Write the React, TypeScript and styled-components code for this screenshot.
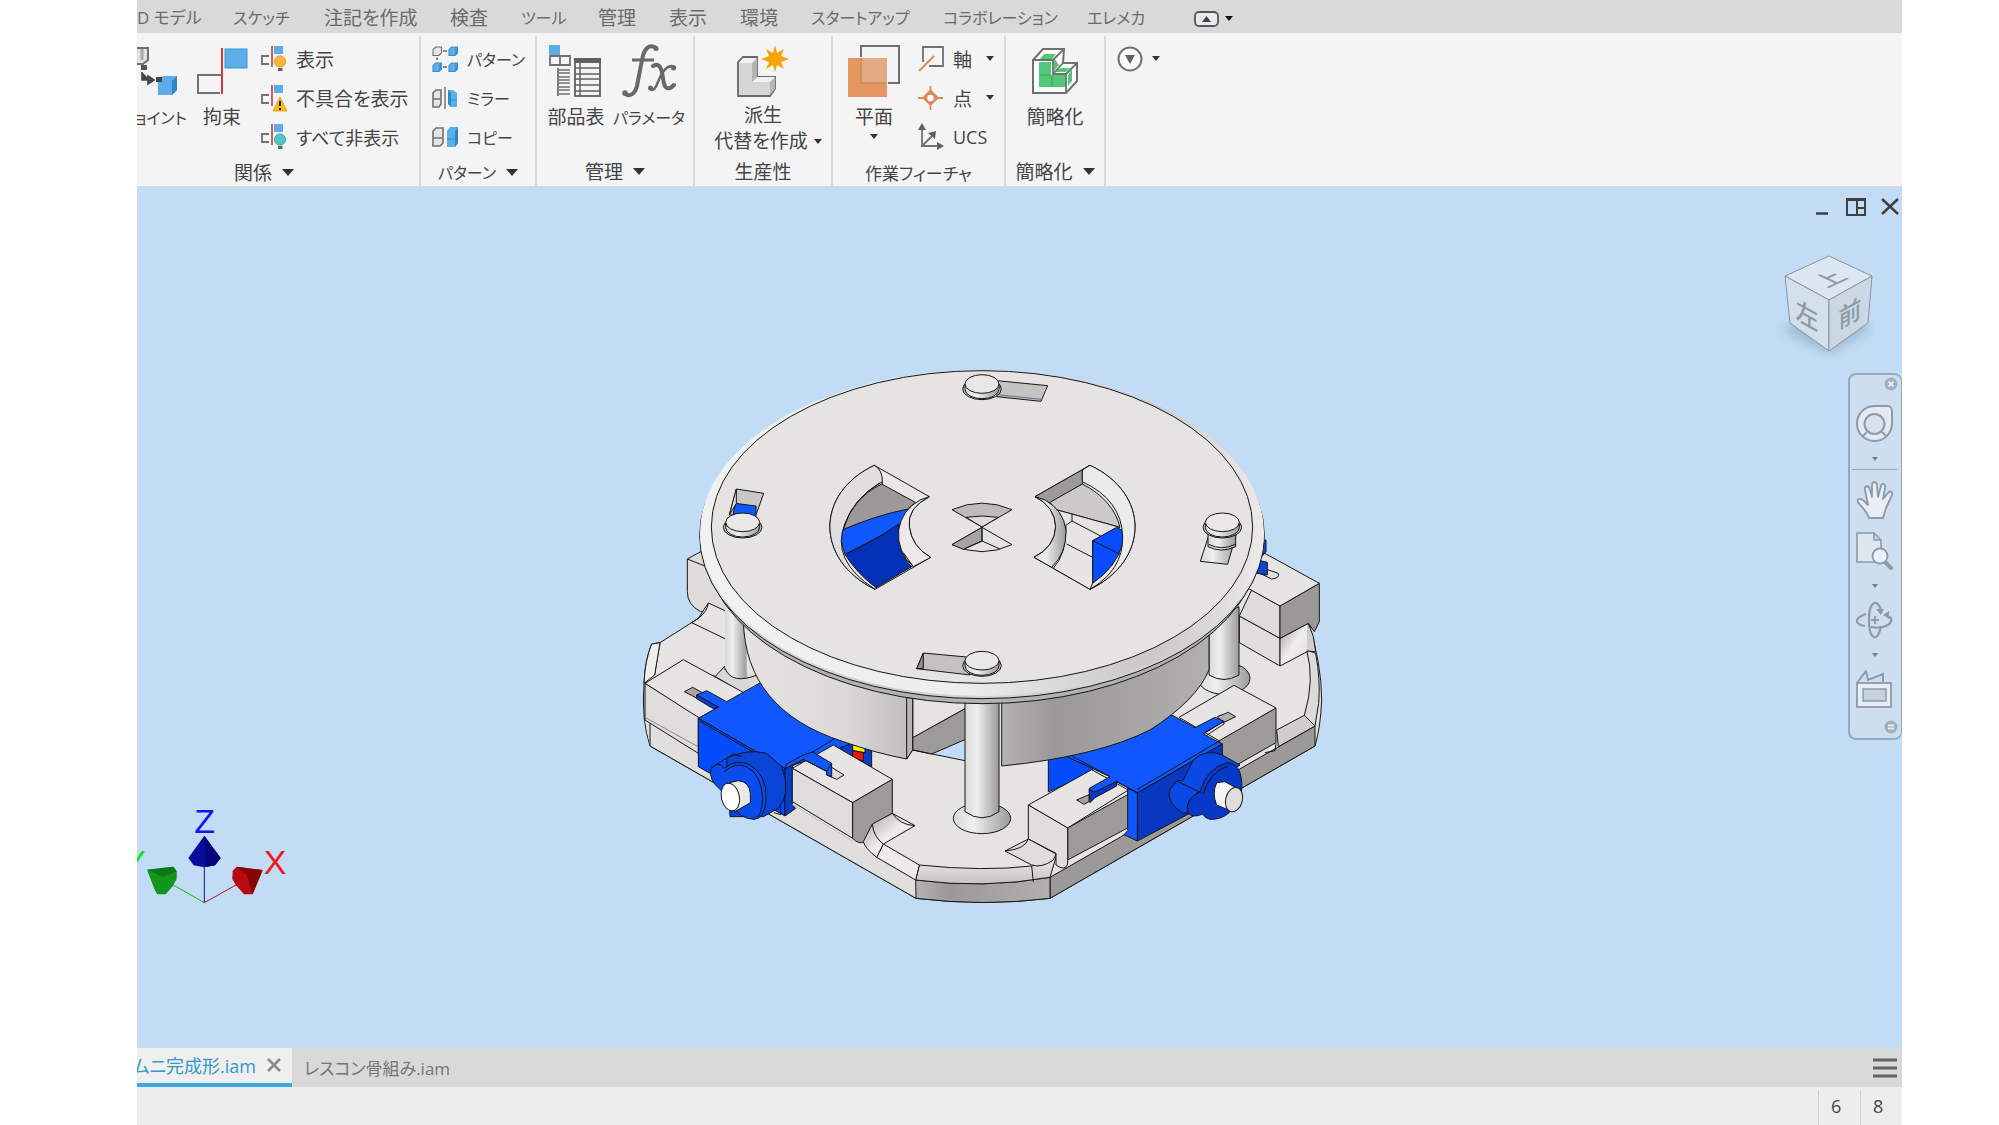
import React from 'react';
import styled, { createGlobalStyle, css } from 'styled-components';

const GlobalStyle = createGlobalStyle`
  * { box-sizing: border-box; }
  body {
    margin: 0;
    background: #fff;
    font-family: "Open Sans", "Noto Sans CJK JP", sans-serif;
    font-size: 18px;
    font-feature-settings: "palt";
    color: #444;
  }
  button {
    margin: 0;
    padding: 0;
    border: 0;
    background: none;
    font: inherit;
    font-feature-settings: inherit;
    color: inherit;
    white-space: nowrap;
    cursor: pointer;
  }
  svg { display: block; flex: none; }
`;

const labelSize = (text: string) => {
  const katakana = /[ァ-ヶ]/.test(text);
  const kanji = /[一-龠]/.test(text);
  if (katakana) return kanji || /[A-Z]/.test(text) ? 17 : 16;
  return kanji && !/[ぁ-ん]{2}/.test(text) ? 19 : 18;
};

const Text = styled.span<{ $size: number }>`
  font-size: ${(p) => p.$size}px;
`;

const Label = ({ children }: { children: string }) => <Text $size={labelSize(children)}>{children}</Text>;

const Page = styled.div`
  height: 100vh;
  padding: 0 97px 0 137px;
`;

const Window = styled.div`
  display: flex;
  flex-direction: column;
  height: 100%;
  overflow: hidden;
  background: #ededed;
`;

/* ---------- ribbon tabs ---------- */

const RibbonTabs = styled.nav`
  display: flex;
  align-items: center;
  flex: none;
  height: 33px;
  background: #d9d9d9;
  color: #6a6a6a;
`;

const RibbonTab = styled.button<{ $width: number }>`
  flex: 0 0 ${(p) => p.$width}px;
  line-height: 30px;
  padding-top: 2px;
  text-align: left;
`;

const TabsToggle = styled.button`
  display: flex;
  align-items: center;
  gap: 6px;
  margin-left: 16px;
  padding-top: 4px;
`;

/* ---------- ribbon ---------- */

const Ribbon = styled.div`
  display: flex;
  flex: none;
  height: 155px;
  padding-top: 3px;
  background: #f4f4f4;
  border-bottom: 2px solid #d3d9de;
`;

const PanelBox = styled.section<{ $width: number }>`
  display: flex;
  flex-direction: column;
  flex: 0 0 ${(p) => p.$width}px;
  border-right: 2px solid #d9d9d9;
`;

const PanelBody = styled.div<{ $pad?: number }>`
  display: flex;
  flex: 1;
  padding-left: ${(p) => p.$pad || 0}px;
`;

const PanelTitle = styled.button<{ $wide?: boolean }>`
  display: flex;
  justify-content: center;
  align-items: center;
  gap: 10px;
  height: 32px;
  padding-top: 2px;
  padding-right: ${(p) => (p.$wide ? 28 : 0)}px;
`;

const BigButton = styled.button<{ $width: number; $clip?: boolean }>`
  display: flex;
  flex-direction: column;
  align-items: center;
  flex: 0 0 ${(p) => p.$width}px;
  padding-top: 8px;
  line-height: 26px;
  ${(p) => p.$clip && css`align-items: flex-end; overflow: hidden;`}
`;

const BigLabel = styled.span<{ $tight?: boolean }>`
  margin-top: ${(p) => (p.$tight ? 4 : 6)}px;
`;

const LabelWithArrow = styled.span`
  display: flex;
  align-items: center;
  gap: 6px;
  padding-left: 10px;
`;

const ArrowBelow = styled.span`
  padding-top: 4px;
`;

const SmallColumn = styled.div<{ $left?: number }>`
  display: flex;
  flex-direction: column;
  padding-top: 3px;
  padding-left: ${(p) => p.$left || 0}px;
`;

const SmallButton = styled.button`
  display: flex;
  align-items: center;
  gap: 9px;
  height: 39px;
`;

const SmallLabel = styled.span<{ $width?: number }>`
  min-width: ${(p) => p.$width || 0}px;
  text-align: left;
`;

const RoundMenu = styled.button`
  display: flex;
  align-items: center;
  gap: 9px;
  height: 39px;
  margin: 3px 0 0 11px;
`;

const Caret = ({ size = 8, color = '#333' }: { size?: number; color?: string }) => (
  <svg width={size} height={size / 2 + 1} viewBox="0 0 12 7" preserveAspectRatio="none">
    <path d="M0 0H12L6 7Z" fill={color} />
  </svg>
);

/* ---------- ribbon icons ---------- */

const BLUE = '#5dade8';
const GREY = '#707070';

const Cube = ({ x, y, s, fill }: { x: number; y: number; s: number; fill: string }) => (
  <g transform={`translate(${x} ${y}) scale(${s})`}>
    <path d="M0 3L3 0H10V7L7 10H0Z" fill={fill} stroke={fill === BLUE ? '#3a8fd0' : GREY} strokeWidth="1.300" />
    {fill === BLUE && <path d="M7 3L10 0V7L7 10Z" fill="#3a8fd0" />}
  </g>
);

const JointIcon = () => (
  <svg width="50" height="54" viewBox="0 0 50 54">
    <g transform="translate(-9 0)">
      <path d="M0 4H20V15L15 20H0Z" fill="#e2e2e2" />
      <path d="M0 4H20V16L15 20H2" fill="none" stroke={GREY} strokeWidth="2" />
      <path d="M14 5V16" stroke="#aaa" strokeWidth="3" />
      <rect x="13" y="21" width="6" height="5" fill="#555" />
      <path d="M14 28V36H22M20 32L26 36L20 40Z" fill="#444" stroke="#444" strokeWidth="1.600" />
      <path d="M30 37L35 32H49V46L44 51H30Z" fill={BLUE} />
      <path d="M44 37L49 32V46L44 51Z" fill="#2f86c8" />
      <rect x="28" y="33" width="6" height="5" fill="#444" />
    </g>
  </svg>
);

const ConstrainIcon = () => (
  <svg width="52" height="54" viewBox="0 0 52 54">
    <rect x="29" y="5" width="22" height="19" fill={BLUE} stroke="#3f93d2" />
    <path d="M25 31H2V49H24" fill="none" stroke={GREY} strokeWidth="2" />
    <path d="M26 4V50" stroke="#d5353f" strokeWidth="2" />
  </svg>
);

const RelationIcon = ({ kind }: { kind: 'show' | 'warn' | 'hide' }) => (
  <svg width="26" height="28" viewBox="0 0 26 28">
    <rect x="13" y="1" width="9" height="8" fill={BLUE} />
    <path d="M8 11H1V19H8" fill="none" stroke={GREY} strokeWidth="1.800" />
    <path d="M11 1V22" stroke="#d5353f" strokeWidth="1.600" />
    {kind === 'warn' ? (
      <>
        <path d="M19 13L26 27H12Z" fill="#fbbf16" stroke="#d99a00" strokeWidth=".8" />
        <path d="M19 17V22M19 24V26" stroke="#222" strokeWidth="2" />
      </>
    ) : (
      <>
        <circle cx="19" cy="16.500" r="5.600" fill={kind === 'show' ? '#f7b63e' : '#56c5c8'} stroke={kind === 'show' ? '#e09a20' : '#35a6aa'} />
        <path d="M17 23H21.500V26H17Z" fill="#666" />
      </>
    )}
  </svg>
);

const PatternIcon = () => (
  <svg width="26" height="28" viewBox="0 0 26 28">
    <Cube x={1} y={2} s={0.85} fill="#e4e4e4" />
    <Cube x={17} y={2} s={0.85} fill={BLUE} />
    <Cube x={1} y={18} s={0.85} fill={BLUE} />
    <Cube x={17} y={18} s={0.85} fill={BLUE} />
    <path d="M11 6H15M11 22H15M5 12.500V15" stroke="#666" strokeWidth="1.500" />
  </svg>
);

const MirrorIcon = () => (
  <svg width="26" height="28" viewBox="0 0 26 28">
    <path d="M1 9L4 6H9V20L7 23H1ZM1 15H8" fill="#e4e4e4" stroke={GREY} strokeWidth="1.600" />
    <path d="M13 3V25" stroke="#777" strokeWidth="1.500" />
    <path d="M16 6H21L25 9V23H19L16 20Z" fill={BLUE} />
    <path d="M16 6L19 9V23L16 20Z" fill="#2f86c8" />
    <path d="M19 16H25" stroke="#3a8fd0" />
  </svg>
);

const CopyIcon = () => (
  <svg width="26" height="28" viewBox="0 0 26 28">
    <path d="M1 8L4 5H11V20L8 23H1ZM1 15H10" fill="#e4e4e4" stroke={GREY} strokeWidth="1.600" />
    <path d="M15 8L18 4H26V20L23 24H15Z" fill={BLUE} />
    <path d="M23 8L26 4V20L23 24Z" fill="#2f86c8" />
    <path d="M15 16H23" stroke="#3a8fd0" />
  </svg>
);

const BomIcon = () => (
  <svg width="54" height="54" viewBox="0 0 54 54">
    <rect x="0" y="1" width="11" height="11" fill={BLUE} />
    <path d="M1 12V21H11V12H21V21H11M11 12H1" fill="none" stroke={GREY} strokeWidth="1.800" />
    <path d="M9 24V52" stroke={GREY} strokeWidth="1.800" />
    <path d="M10 26H21M10 29H21M10 33H21M10 36H21M10 39H21M10 43H21M10 46H21M10 50H21" stroke={GREY} strokeWidth="1.500" />
    <rect x="25" y="14" width="27" height="5" fill="#606060" />
    <rect x="26" y="15" width="25" height="37" fill="none" stroke="#606060" strokeWidth="1.800" />
    <path d="M31 19V52M26 24H51M26 30H51M26 35H51M26 41H51M26 47H51" stroke="#606060" strokeWidth="1.500" fill="none" />
  </svg>
);

const FxIcon = () => (
  <svg width="54" height="54" viewBox="0 0 54 54">
    <g fill="none" stroke="#686868" strokeLinecap="round">
      <path d="M34 4C27 -1 22 5 20 16L15 42C13 50 8 53 3 50" strokeWidth="4" />
      <path d="M10 16H32" strokeWidth="3" strokeLinecap="butt" />
      <path d="M31 22C38 18 40 26 41 34C42 45 46 47 52 41" strokeWidth="4" />
      <path d="M53 23C45 19 39 30 36 38C33 46 30 47 28 45" strokeWidth="2.500" />
    </g>
    <circle cx="34" cy="4.500" r="2.500" fill="#686868" />
    <circle cx="3" cy="49" r="2.800" fill="#686868" />
    <circle cx="51.500" cy="24" r="2.500" fill="#686868" />
    <circle cx="28.500" cy="44" r="2.500" fill="#686868" />
  </svg>
);

const DeriveIcon = () => (
  <svg width="52" height="54" viewBox="0 0 52 54">
    <path d="M1 52V18L6 13H20V33H38V45L33 52Z" fill="#d6d6d6" stroke="#686868" strokeWidth="1.800" />
    <path d="M6 14H20L15 19H2ZM20 33H38L33 38H15Z" fill="#f1f1f1" />
    <path d="M15 19L20 14V33L15 38ZM33 38L38 33V45L33 51Z" fill="#b5b5b5" />
    <path d="M38 1L40 9L47 5L44 12L52 15L44 18L47 25L40 21L38 28L36 21L29 25L32 18L24 15L32 12L29 5L36 9Z" fill="#f5a20b" />
  </svg>
);

const PlaneIcon = () => (
  <svg width="54" height="54" viewBox="0 0 54 54">
    <path d="M14 13V2H52V39H41" fill="none" stroke={GREY} strokeWidth="2" />
    <rect x="1" y="14" width="39" height="39" fill="#e6975f" />
    <rect x="14" y="14" width="26" height="25" fill="#e2aa82" />
    <path d="M14 14V39H40" fill="none" stroke="#c98c5d" strokeWidth="1.500" />
  </svg>
);

const AxisIcon = () => (
  <svg width="26" height="28" viewBox="0 0 26 28">
    <path d="M5 17V2H25V21H11" fill="none" stroke={GREY} strokeWidth="1.800" />
    <path d="M1 26L16 11" stroke="#e28c56" strokeWidth="2.200" />
  </svg>
);

const PointIcon = () => (
  <svg width="26" height="28" viewBox="0 0 26 28">
    <path d="M0 14H25M12.500 2V26" stroke="#dc8a5a" strokeWidth="1.800" />
    <path d="M12.500 5L21 14L12.500 22L4 14Z" fill="#dc8a5a" />
    <circle cx="12.500" cy="14" r="3.200" fill="#fff" />
  </svg>
);

const UcsIcon = () => (
  <svg width="26" height="28" viewBox="0 0 26 28">
    <path d="M4 5V23H22M5 22L15 12" fill="none" stroke={GREY} strokeWidth="1.800" />
    <path d="M4 0L8 7H0ZM26 23L19 27V19ZM18 8L17 16L10 10Z" fill="#606060" />
  </svg>
);

const SimplifyIcon = () => (
  <svg width="48" height="54" viewBox="0 0 48 54">
    <path d="M2 16L12 5H33L32 19H46V37L35 49H2Z" fill="#fff" stroke={GREY} strokeWidth="2" />
    <path d="M8 18H20V31H34V43H8Z" fill="#50c878" />
    <path d="M13 10H25L21 15H9ZM26 25L31 24H39L35 28H24ZM23 14V27L28 21ZM37 31L41 25V37L37 42Z" fill="#50c878" />
    <path d="M2 16H22V30H35V49M22 16L33 5M22 30L32 19M35 30L46 19" fill="none" stroke={GREY} strokeWidth="1.800" />
    <path d="M8 31H20M21 31V43" fill="none" stroke="#3aa860" strokeWidth="1.200" />
  </svg>
);

/* ---------- viewport ---------- */

const Viewport = styled.main`
  position: relative;
  flex: 1;
  min-height: 0;
  overflow: hidden;
  background: #c2dcf5;
`;

const Model = styled.svg`
  width: 100%;
  height: 100%;
`;

const Triad = styled.svg`
  position: absolute;
  left: 0;
  bottom: 138px;
`;

const WindowControls = styled.div`
  position: absolute;
  top: 7px;
  right: 0;
  display: flex;
  gap: 10px;
`;

const WindowButton = styled.button`
  display: grid;
  place-items: center;
  width: 24px;
  height: 24px;
`;

const ViewCubeButton = styled.button`
  position: absolute;
  top: 60px;
  right: 28px;
`;

const NavBar = styled.aside`
  position: absolute;
  top: 185px;
  right: 0;
  display: flex;
  flex-direction: column;
  align-items: center;
  width: 54px;
  height: 367px;
  padding-right: 2px;
  border: 2px solid #93aac0;
  border-right-width: 1px;
  border-radius: 8px;
  background: #cddfee;
`;

const NavEdge = styled.button<{ $last?: boolean }>`
  align-self: flex-end;
  display: grid;
  place-items: center;
  width: 16px;
  height: 18px;
  margin-top: ${(p) => (p.$last ? 'auto' : '0')};
  margin-bottom: ${(p) => (p.$last ? 2 : 9)}px;
`;

const NavButton = styled.button<{ $divided?: boolean }>`
  display: flex;
  flex-direction: column;
  align-items: center;
  gap: 14px;
  width: 46px;
  padding: 3px 0 ${(p) => (p.$divided ? 8 : 10)}px;
  ${(p) => p.$divided && css`border-bottom: 1px solid #93aac0; margin-bottom: 8px;`}
`;

const E = '#8d9aa7';

const WheelIcon = () => (
  <svg width="37" height="38" viewBox="0 0 37 38">
    <path d="M18 1H31C35 1 36 3 36 7V19A17.500 17.500 0 1 1 18 1Z" fill="#e3eaf1" stroke={E} strokeWidth="2" />
    <circle cx="18.500" cy="19" r="10" fill="#d6e2ee" stroke={E} strokeWidth="2" />
    <path d="M11 27L6 32M26 27L31 32" stroke={E} strokeWidth="2" />
  </svg>
);

const HandIcon = () => (
  <svg width="37" height="38" viewBox="0 0 37 38">
    <path d="M13 37C11 30 6 27 2 21C0 17 5 17 8 20L12 24L9 9C8 4 13 4 14 9L16 16V4C16 0 20 0 21 4L22 16L25 5C26 1 30 3 29 7L27 18L32 12C34 9 37 11 36 14L30 27L27 37Z" fill="#e8eef4" stroke={E} strokeWidth="1.800" strokeLinejoin="round" />
  </svg>
);

const PageZoomIcon = () => (
  <svg width="37" height="38" viewBox="0 0 37 38">
    <path d="M1 1H18L25 8V30H1ZM18 1V8H25" fill="#dde7f0" stroke={E} strokeWidth="1.600" />
    <path d="M29 30L35 36" stroke={E} strokeWidth="4" strokeLinecap="round" />
    <circle cx="24" cy="24" r="7.500" fill="#eaf1f8" stroke={E} strokeWidth="1.800" />
  </svg>
);

const OrbitIcon = () => (
  <svg width="37" height="38" viewBox="0 0 37 38">
    <g fill="none" stroke={E} strokeWidth="2.200">
      <path d="M10 13C-2 17 -2 23 9 25M15 26C27 28 37 24 35 17L30 14" />
      <path d="M25 9C22 -2 13 -1 13 18C13 40 22 42 25 25" />
      <path d="M15 19H23M19 15V23" strokeWidth="1.800" />
    </g>
    <path d="M20 8H28L25 14ZM27 14L33 10V18Z" fill={E} />
  </svg>
);

const CameraIcon = () => (
  <svg width="37" height="38" viewBox="0 0 37 38">
    <path d="M1 13L10 1L12 10L27 4V12" fill="none" stroke={E} strokeWidth="2" />
    <rect x="1" y="13" width="34" height="24" fill="#e6edf4" stroke={E} strokeWidth="1.800" />
    <rect x="7" y="19" width="23" height="12" fill="#c5d3e1" stroke={E} strokeWidth="1.500" />
  </svg>
);

const EdgeDot = ({ d }: { d: string }) => (
  <svg width="14" height="14" viewBox="0 0 14 14">
    <circle cx="7" cy="7" r="6.500" fill="#a3afbb" />
    <path d={d} stroke="#e3ebf2" strokeWidth="1.800" fill="none" />
  </svg>
);

const ViewCube = () => (
  <svg width="102" height="112" viewBox="0 0 102 112">
    <defs>
      <filter id="cubeShadow" x="-30%" y="-60%" width="160%" height="220%">
        <feGaussianBlur stdDeviation="6" />
      </filter>
    </defs>
    <path d="M10 82L57 58L100 80L57 105Z" fill="#8ea9c4" opacity=".75" filter="url(#cubeShadow)" />
    <g stroke="#8795a4" strokeWidth="1" strokeLinejoin="round">
      <path d="M57 8L13 28L57 52L100 28Z" fill="#dce7f1" />
      <path d="M13 28L57 52V103L18 75Z" fill="#d3dfea" />
      <path d="M100 28L57 52V103L96 75Z" fill="#cbd8e4" />
    </g>
    <g fill="#8f9aa5" fontFamily="Noto Sans CJK JP" fontSize="26" textAnchor="middle" fontWeight="500">
      <text transform="matrix(.86 -.4 .86 .4 66 35)">上</text>
      <text transform="matrix(.88 .48 0 1 35 77)">左</text>
      <text transform="matrix(.88 -.48 0 1 78 75)">前</text>
    </g>
  </svg>
);

const TriadAxes = () => (
  <Triad width="153" height="107" viewBox="21 40 459 321">
    <path d="M223 339L130 286" stroke="#18b818" strokeWidth="3" />
    <path d="M223 339L318 286" stroke="#b81020" strokeWidth="3" />
    <path d="M223 339V230" stroke="#1010a0" strokeWidth="3" />
    <path d="M223 138L272 205L255 227L223 233L191 227L175 205Z" fill="#0a0a9c" />
    <path d="M223 138L272 205L255 227L228 232Z" fill="#05057a" />
    <path d="M51 240L130 231L140 245V268L128 290L107 314H82L74 300Z" fill="#12971a" />
    <path d="M51 240L130 231L140 245L100 262Z" fill="#0c7a14" />
    <path d="M398 241L320 231L308 243L307 268L318 287L342 314H368Z" fill="#b80a10" />
    <path d="M398 241L320 231L350 256L368 314Z" fill="#860408" />
    <g fontFamily="Liberation Sans, sans-serif" fontSize="102" textAnchor="middle">
      <text x="224" y="131" fill="#1414f0">Z</text>
      <text x="435" y="253" fill="#f01818">X</text>
      <text x="13" y="253" fill="#18e018">Y</text>
    </g>
  </Triad>
);

const BoltHead = ({ x, y }: { x: number; y: number }) => (
  <g>
    <ellipse cx={x} cy={y + 15} rx="58" ry="32" fill="#c9c8c6" />
    <path d={`M${x - 51} ${y}V${y + 16}A51 28 0 0 0 ${x + 51} ${y + 16}V${y}Z`} fill="url(#pillar)" />
    <ellipse cx={x} cy={y} rx="51" ry="28" fill="#e9e8e6" />
  </g>
);

const RobotModel = () => (
  <Model viewBox="-1479 -516 5295 2580" aria-label="3D モデル">
    <defs>
      <linearGradient id="pillar">
        <stop offset="0" stopColor="#d8d8d7" />
        <stop offset=".35" stopColor="#efefee" />
        <stop offset="1" stopColor="#9c9a9a" />
      </linearGradient>
      <linearGradient id="wallLeft">
        <stop offset="0" stopColor="#e4e3e1" />
        <stop offset=".6" stopColor="#dbdad8" />
        <stop offset="1" stopColor="#bdbcba" />
      </linearGradient>
      <linearGradient id="wallRight">
        <stop offset="0" stopColor="#b4b3b2" />
        <stop offset=".25" stopColor="#9a9898" />
        <stop offset="1" stopColor="#b1b0af" />
      </linearGradient>
      <linearGradient id="rim">
        <stop offset="0" stopColor="#f1f1f0" />
        <stop offset=".45" stopColor="#eeeeec" />
        <stop offset=".8" stopColor="#c9c8c7" />
        <stop offset="1" stopColor="#ecebea" />
      </linearGradient>
      <linearGradient id="bevel" x1="0" y1="0" x2="0" y2="1">
        <stop offset="0" stopColor="#efeeec" />
        <stop offset="1" stopColor="#c4c3c1" />
      </linearGradient>
      <linearGradient id="lip" x1="0" y1="0" x2="1" y2="1">
        <stop offset="0" stopColor="#9d9b9b" />
        <stop offset=".5" stopColor="#efeeed" />
        <stop offset="1" stopColor="#dddcda" />
      </linearGradient>
    </defs>
    <g stroke="#161616" strokeWidth="3" strokeLinejoin="round" fill="none">
      {/* rear blocks */}
      <path d="M172 597L212 575L260 640L300 760L212 755Q172 735 172 695Z" fill="#dddcda" />
      <path d="M172 597L222 617" />

      {/* base plate */}
      <path d="M205 775L235 729L520 860L1600 900L1860 650L2033 780Q2075 910 2075 1020Q2072 1100 2055 1158L1260 1615Q1060 1640 858 1615L60 1158Q34 1080 42 970Q45 900 65 852L90 848L185 788Z" fill="#e5e4e2" />
      <path d="M90 850Q80 900 74 945M185 788L205 775Q232 755 235 729M185 788L285 836" />
      <path d="M65 852L90 848L74 945L42 970Q45 900 65 852Z" fill="#f0efee" />
      <path d="M45 1080L857 1560V1615L60 1158Z" fill="#e1dfde" stroke="none" />
      <path d="M60 1090V1158L858 1615" />
      <path d="M1260 1552L2055 1098V1158L1260 1615Z" fill="#9c9999" />
      <path d="M857 1560Q1060 1587 1260 1552V1615Q1060 1640 858 1615Z" fill="url(#wallRight)" />
      <path d="M868 1515Q1060 1535 1205 1518L1280 1485L1260 1552Q1060 1587 857 1560Z" fill="url(#bevel)" />
      <path d="M760 1452L868 1515L857 1560L740 1492Z" fill="#edecea" />
      <path d="M1205 1518L1210 1566" />
      <path d="M2030 870L2057 880Q2072 960 2066 1030L2055 1098L2023 1066Q2055 960 2030 870Z" fill="#dcdbda" />
      <path d="M1940 1110L2023 1066L2055 1098L1945 1160Z" fill="#cfcecd" />

      {/* rear right block */}
      <path d="M1828 768L1950 835V918L1828 848Z" fill="#dfdedc" />
      <path d="M1950 835L2035 790V873L1950 918Z" fill="url(#lip)" />
      <path d="M2035 790L2050 830L2057 875L2030 873" fill="#cfcecd" />
      <path d="M1865 690L1950 738V835L1828 768Z" fill="#dddcda" />
      <path d="M1950 738L2068 670V785L2053 815L2035 790L1950 835Z" fill="#9b9898" />
      <path d="M1860 560L1910 583L2068 670L1950 738L1800 655Z" fill="#e5e4e2" />
      <path d="M1890 640L1910 628L1945 640Q1950 655 1925 657Z" fill="#e0dfdd" />
      <path d="M1880 540L1908 540V575L1895 590ZM1890 602L1912 607V645L1880 640Z" fill="#1045d8" />

      {/* rear pillars */}
      <path d="M255 950L285 918L400 950L340 1000Z" fill="#d9d8d6" stroke="none" />
      <path d="M255 950L285 918V930M250 946L340 1000" />
      <path d="M285 730H350V955Q300 965 285 925Z" fill="url(#pillar)" stroke="none" />
      <path d="M285 925Q305 975 382 945" />
      <ellipse cx="1782" cy="955" rx="78" ry="48" fill="url(#pillar)" />
      <path d="M1737 780V945Q1782 972 1827 945V740Z" fill="url(#pillar)" />

      {/* opening behind the front pillar */}
      <path d="M898 1182L1010 1127V1202L935 1188Z" fill="#c2dcf5" stroke="none" />
      <path d="M848 1133L1060 1015V1115L905 1182L848 1170Z" fill="#9d9a9a" />
      <path d="M848 1015H1060L848 1133Z" fill="#e4e3e1" />
      <path d="M848 1170L1010 1203" />

      {/* cable */}
      <path d="M610 1135L725 1165V1220L668 1190L610 1165Z" fill="#0b3ccc" />
      <path d="M668 1155H705V1178L668 1172Z" fill="#ffee00" />
      <path d="M668 1172L700 1178V1202L668 1195Z" fill="#f01414" />

      {/* left front block, outer half */}
      <path d="M45 970L160 899L345 1000L205 1075Z" fill="#e6e5e3" />
      <path d="M45 970L205 1072V1180L45 1080Z" fill="#dedddb" />
      <path d="M45 1072L240 1180" stroke="#8a8988" />
      <path d="M163 995L188 982L265 1025L240 1035Z" fill="#a9a7a6" />

      {/* left servo */}
      <path d="M205 1075L265 1041L200 1005L230 992L290 1025L400 963L720 1130L465 1225Z" fill="#1157ff" />
      <path d="M200 1005L265 1041L250 1046L200 1016Z" fill="#0a3fd0" />
      <path d="M205 1075L465 1225V1368L205 1220Z" fill="#064cff" />
      <path d="M465 1225L487 1213V1335L497 1345L465 1368Z" fill="#0a3ccc" />
      <path d="M210 1084L462 1230M452 1228V1364L432 1358" />

      {/* left front block, inner half */}
      <path d="M487 1225L610 1155L787 1258L668 1328Z" fill="#e6e5e3" />
      <path d="M487 1225L668 1328V1435L487 1325Z" fill="#dedddb" />
      <path d="M668 1328L787 1258V1360L727 1395L705 1445Q685 1455 668 1435Z" fill="#9d9a9a" />
      <path d="M787 1360L855 1397L760 1452L740 1492Q705 1465 700 1445L727 1392Z" fill="url(#lip)" />
      <path d="M727 1392Q730 1430 760 1452M787 1360Q810 1395 855 1397" />
      <path d="M605 1222L642 1245L620 1258L590 1245Z" fill="#dddcda" />
      <path d="M520 1185L548 1176L605 1210V1250L590 1245V1234L520 1198L468 1225V1213Z" fill="#1157ff" />
      <path d="M520 1198L590 1234L605 1210M615 1135L545 1178" />
      <path d="M487 1333L668 1444" stroke="#bbb" />

      {/* left servo horn */}
      <path d="M290 1195Q350 1165 410 1180L455 1220Q485 1300 445 1345L400 1370H300Z" fill="#0845d8" />
      <path d="M243 1225Q268 1200 283 1225Q320 1195 360 1215Q410 1245 408 1315Q405 1380 370 1378Q330 1375 310 1340L270 1288Q235 1260 243 1225Z" fill="#0a4cf0" />
      <path d="M243 1225L265 1210L310 1182L335 1190M283 1235Q315 1205 350 1220Q395 1245 398 1315Q395 1375 370 1378" />
      <path d="M290 1270L325 1262Q358 1265 361 1300V1328L315 1355Z" fill="#e9e9e6" />
      <ellipse cx="301" cy="1311" rx="27" ry="42" transform="rotate(-12 301 1311)" fill="#fff" />

      {/* right servo and blocks */}
      <path d="M1647 1072L1812 976L1938 1044L1770 1144Z" fill="#e6e5e3" />
      <path d="M1768 1142L1938 1044V1148L1820 1215L1770 1190Z" fill="#9d9a9a" />
      <path d="M1905 1178L1935 1172L1938 1150" />
      <path d="M1762 1070L1795 1057L1817 1070L1780 1088Z" fill="#b0afae" />
      <path d="M1255 1190L1420 1180L1380 1240L1255 1296Z" fill="#064cff" />
      <path d="M1195 1335L1385 1229L1495 1290L1313 1404Z" fill="#e6e5e3" />
      <path d="M1313 1404L1500 1300V1400L1313 1500Z" fill="#9d9a9a" />
      <path d="M1195 1335L1313 1404V1512Q1305 1535 1278 1515V1480L1195 1437Z" fill="#dfdedc" />
      <path d="M1195 1437L1278 1482L1270 1500Q1235 1525 1205 1515L1125 1473Z" fill="#dedddb" />
      <path d="M1125 1473Q1185 1468 1195 1437" />
      <path d="M1522 1298L1777 1152V1300L1670 1365L1522 1443Z" fill="#0838c0" />
      <path d="M1493 1285L1522 1298V1443L1482 1424L1493 1412Z" fill="#1157ff" />
      <path d="M1300 1185L1625 1065L1695 1103L1755 1072L1782 1084L1720 1122L1777 1152L1522 1298L1460 1265L1395 1300L1378 1285L1440 1250Z" fill="#1157ff" />
      <path d="M1377 1288L1395 1296L1460 1264V1278L1395 1313L1380 1328Z" fill="#0838c8" />
      <path d="M1340 1320L1377 1304V1325L1362 1333Z" fill="#a5a3a2" />
      <path d="M1522 1288L1768 1143M1460 1265L1522 1298M1718 1122L1782 1084V1092L1730 1126" />
      <path d="M1320 1185L1440 1250" />
      <path d="M1660 1260L1690 1200Q1725 1165 1775 1184L1830 1215L1700 1300L1720 1350L1660 1360Q1610 1330 1618 1290L1640 1263Z" fill="#0a49e6" />
      <path d="M1710 1295Q1730 1225 1790 1208Q1840 1210 1835 1290Q1810 1380 1740 1378Q1725 1375 1718 1362Q1690 1375 1675 1360Q1660 1320 1710 1295Z" fill="#0838c8" />
      <path d="M1640 1263L1712 1298M1720 1300Q1740 1235 1795 1218" />
      <path d="M1785 1265L1760 1268Q1745 1300 1760 1335L1800 1352L1830 1290Z" fill="#f4f4f2" />
      <ellipse cx="1812" cy="1319" rx="25" ry="37" transform="rotate(15 1812 1319)" fill="#deddda" />

      {/* drum under the disk */}
      <path d="M340 780Q345 1050 640 1145Q740 1180 830 1197L848 1170V1000L700 900Z" fill="url(#wallLeft)" />
      <path d="M830 1012V1197L848 1170V1015Z" fill="#b7b6b5" />
      <path d="M1115 1020V1218Q1400 1190 1560 1110Q1700 1020 1737 930V800L1500 900Z" fill="url(#wallRight)" />

      {/* front pillar */}
      <ellipse cx="1056" cy="1375" rx="86" ry="46" fill="url(#pillar)" />
      <path d="M1005 1020V1355Q1056 1392 1107 1355V1020Z" fill="url(#pillar)" />

      {/* disk */}
      <ellipse cx="1056" cy="546" rx="835" ry="485" fill="#b3b2b1" />
      <ellipse cx="1056" cy="527" rx="847" ry="489" fill="#d3d2d1" />
      <ellipse cx="1056" cy="519" rx="846" ry="489" fill="url(#rim)" stroke="none" />
      <ellipse cx="1056" cy="501" rx="812" ry="469" fill="#e5e4e2" />

      {/* left window */}
      <path d="M733 316L898 410Q830 445 838 500Q845 560 902 592L735 688C555 600 555 400 733 316Z" fill="#e9e8e7" />
      <path d="M755 372L856 427L830 450L640 510Q660 420 755 372Z" fill="#9c9a99" />
      <path d="M636 510Q740 465 835 447L806 500L645 583Q630 545 636 510Z" fill="#1157ff" />
      <path d="M645 583Q730 545 806 492Q800 580 845 620L738 683Q680 640 645 583Z" fill="#0530b8" />
      <path d="M733 316C555 400 555 600 735 688Q600 600 645 490Q675 410 757 365Q758 330 733 316Z" fill="#e0dfde" />
      <path d="M898 410Q830 445 838 500Q845 560 902 592L850 620Q800 575 806 510Q815 450 870 420Z" fill="#ebeae9" />
      <path d="M757 365V372M642 503Q665 420 750 368M820 578L850 620" />

      {/* right window */}
      <path d="M1380 316L1215 410Q1275 440 1277 500Q1275 560 1212 592L1380 688C1560 600 1560 400 1380 316Z" fill="#e9e8e7" />
      <path d="M1380 316L1215 410L1260 430L1357 372V330Z" fill="#9c9a9a" />
      <path d="M1357 372L1260 427L1275 448L1470 502Q1450 420 1357 372Z" fill="#cbcac9" />
      <path d="M1275 448L1470 502L1388 542V670L1380 688L1270 625Q1310 580 1308 500Z" fill="#e6e5e3" />
      <path d="M1326 460V483L1412 528M1308 496L1326 483M1310 552L1388 592" />
      <path d="M1388 542L1460 502L1478 512V550Q1460 620 1388 670Z" fill="#084cff" />
      <path d="M1388 542L1470 583" />
      <path d="M1215 410Q1275 440 1277 500Q1275 560 1212 592L1265 622Q1310 580 1308 510Q1300 450 1245 420Z" fill="url(#pillar)" />
      <path d="M1380 316C1560 400 1560 600 1380 688Q1480 630 1478 530Q1475 420 1357 365V330Z" fill="#ebebe9" />

      {/* centre hourglass */}
      <path d="M966 449Q1056 410 1146 449L1056 501Z" fill="#bdbcba" />
      <path d="M1008 472Q1056 464 1105 472L1056 501Z" fill="#dcdbd9" />
      <path d="M966 554L1056 502L1146 554Q1056 596 966 554Z" fill="#e5e4e2" />
      <path d="M966 554L1056 502V543L1000 568Z" fill="#a6a4a3" />
      <path d="M1056 502V543L1000 568M1056 543L1110 567" />

      {/* slots and bolts */}
      <path d="M1100 62L1253 77L1233 124L1100 110Z" fill="#c5c4c3" />
      <path d="M1100 104L1235 118" stroke="#5d7086" />
      <BoltHead x={1056} y={72} />

      <path d="M319 387L401 400L378 465L298 465Z" fill="#c9c8c7" />
      <path d="M316 430L378 438V470H308Z" fill="#1157ff" />
      <path d="M319 387V430L298 465Z" fill="#e2e1df" />
      <BoltHead x={338} y={487} />

      <path d="M880 879L1020 892V945L860 926Z" fill="#c3c2c1" />
      <path d="M880 879V925L860 926Z" fill="#8e8c8c" />
      <BoltHead x={1056} y={902} />

      <path d="M1735 530L1711 604L1793 613L1818 525Z" fill="url(#pillar)" />
      <path d="M1734 505V560Q1775 580 1817 560V505Z" fill="url(#pillar)" />
      <path d="M1736 553Q1775 573 1816 553" />
      <BoltHead x={1777} y={487} />
    </g>
  </Model>
);

/* ---------- document tabs and status bar ---------- */

const DocTabs = styled.div`
  display: flex;
  align-items: stretch;
  flex: none;
  height: 39px;
  background: #d9d9d9;
  color: #757575;
`;

const DocTab = styled.div<{ $active?: boolean }>`
  display: flex;
  align-items: center;
  gap: 10px;
  padding: 0 12px 1px;
  ${(p) => p.$active && css`
    justify-content: flex-end;
    width: 155px;
    padding: 0 10px 1px 0;
    background: #efefef;
    border-bottom: 4px solid #3aa8de;
    color: #3598cb;
  `}
`;

const MenuButton = styled.button`
  display: flex;
  align-items: center;
  margin-left: auto;
  padding-right: 5px;
`;

const StatusBar = styled.footer`
  display: flex;
  justify-content: flex-end;
  flex: none;
  height: 38px;
  padding-top: 3px;
`;

const StatusCell = styled.span`
  width: 42px;
  padding-left: 12px;
  border-left: 1px solid #d0d0d0;
  line-height: 32px;
`;

/* ---------- app ---------- */

const TABS: [string, number][] = [
  ['D モデル', 96],
  ['スケッチ', 91],
  ['注記を作成', 126],
  ['検査', 71],
  ['ツール', 77],
  ['管理', 71],
  ['表示', 71],
  ['環境', 71],
  ['スタートアップ', 132],
  ['コラボレーション', 144],
  ['エレメカ', 91],
];

type PanelProps = {
  title: string;
  width: number;
  pad?: number;
  arrow?: boolean;
  wide?: boolean;
  children: React.ReactNode;
};

const Panel = ({ title, width, pad, arrow, wide, children }: PanelProps) => (
  <PanelBox $width={width}>
    <PanelBody $pad={pad}>{children}</PanelBody>
    <PanelTitle $wide={wide}>
      <Label>{title}</Label>
      {arrow && <Caret size={12} />}
    </PanelTitle>
  </PanelBox>
);

type SmallProps = { icon: React.ReactNode; label: string; arrow?: boolean };

const Small = ({ icon, label, arrow }: SmallProps) => (
  <SmallButton>
    {icon}
    <SmallLabel $width={arrow ? 24 : 0}><Label>{label}</Label></SmallLabel>
    {arrow && <Caret />}
  </SmallButton>
);

export default function App() {
  return (
    <Page>
      <GlobalStyle />
      <Window>
        <RibbonTabs>
          {TABS.map(([label, width]) => (
            <RibbonTab key={label} $width={width}><Label>{label}</Label></RibbonTab>
          ))}
          <TabsToggle aria-label="リボン表示">
            <svg width="25" height="16" viewBox="0 0 25 16">
              <rect x="1" y="1" width="23" height="14" rx="4" fill="#e7eaee" stroke="#555" strokeWidth="1.800" />
              <path d="M8 11L12.500 5L17 11Z" fill="#444" />
            </svg>
            <Caret color="#111" />
          </TabsToggle>
        </RibbonTabs>

        <Ribbon>
          <Panel title="関係" width={284} arrow wide>
            <BigButton $width={50} $clip>
              <JointIcon />
              <BigLabel><Label>ョイント</Label></BigLabel>
            </BigButton>
            <BigButton $width={70}>
              <ConstrainIcon />
              <BigLabel><Label>拘束</Label></BigLabel>
            </BigButton>
            <SmallColumn $left={4}>
              <Small icon={<RelationIcon kind="show" />} label="表示" />
              <Small icon={<RelationIcon kind="warn" />} label="不具合を表示" />
              <Small icon={<RelationIcon kind="hide" />} label="すべて非表示" />
            </SmallColumn>
          </Panel>

          <Panel title="パターン" width={116} pad={11} arrow>
            <SmallColumn>
              <Small icon={<PatternIcon />} label="パターン" />
              <Small icon={<MirrorIcon />} label="ミラー" />
              <Small icon={<CopyIcon />} label="コピー" />
            </SmallColumn>
          </Panel>

          <Panel title="管理" width={158} pad={4} arrow>
            <BigButton $width={70}>
              <BomIcon />
              <BigLabel><Label>部品表</Label></BigLabel>
            </BigButton>
            <BigButton $width={76}>
              <FxIcon />
              <BigLabel><Label>パラメータ</Label></BigLabel>
            </BigButton>
          </Panel>

          <Panel title="生産性" width={138} pad={5}>
            <BigButton $width={126}>
              <DeriveIcon />
              <BigLabel $tight><Label>派生</Label></BigLabel>
              <LabelWithArrow><Label>代替を作成</Label><Caret /></LabelWithArrow>
            </BigButton>
          </Panel>

          <Panel title="作業フィーチャ" width={173} pad={6}>
            <BigButton $width={70}>
              <PlaneIcon />
              <BigLabel><Label>平面</Label></BigLabel>
              <ArrowBelow><Caret /></ArrowBelow>
            </BigButton>
            <SmallColumn $left={9}>
              <Small icon={<AxisIcon />} label="軸" arrow />
              <Small icon={<PointIcon />} label="点" arrow />
              <Small icon={<UcsIcon />} label="UCS" />
            </SmallColumn>
          </Panel>

          <Panel title="簡略化" width={100} arrow>
            <BigButton $width={98}>
              <SimplifyIcon />
              <BigLabel><Label>簡略化</Label></BigLabel>
            </BigButton>
          </Panel>

          <RoundMenu aria-label="パネル表示">
            <svg width="26" height="26" viewBox="0 0 26 26">
              <circle cx="13" cy="13" r="11.500" fill="#fafafa" stroke={GREY} strokeWidth="2" />
              <path d="M8 9H18L13 18Z" fill="#606060" />
            </svg>
            <Caret />
          </RoundMenu>
        </Ribbon>

        <Viewport>
          <RobotModel />
          <TriadAxes />
          <WindowControls>
            <WindowButton aria-label="最小化">
              <svg width="20" height="20" viewBox="0 0 20 20"><path d="M4 16.500H16" stroke="#3f3f3f" strokeWidth="2.500" /></svg>
            </WindowButton>
            <WindowButton aria-label="タイル">
              <svg width="20" height="20" viewBox="0 0 20 20">
                <path d="M1 2V18H19V2M11 4V18M11 11H19" fill="none" stroke="#3f3f3f" strokeWidth="2" />
                <path d="M0 2.500H20" stroke="#3f3f3f" strokeWidth="3" />
              </svg>
            </WindowButton>
            <WindowButton aria-label="閉じる">
              <svg width="20" height="20" viewBox="0 0 20 20"><path d="M2 2L18 17M18 2L2 17" stroke="#3f3f3f" strokeWidth="2.500" /></svg>
            </WindowButton>
          </WindowControls>
          <ViewCubeButton aria-label="ビューキューブ"><ViewCube /></ViewCubeButton>
          <NavBar>
            <NavEdge aria-label="閉じる"><EdgeDot d="M4.500 4.500L9.500 9.500M9.500 4.500L4.500 9.500" /></NavEdge>
            <NavButton $divided aria-label="ホイール"><WheelIcon /><Caret size={6} color="#6f7f8f" /></NavButton>
            <NavButton aria-label="画面移動"><HandIcon /></NavButton>
            <NavButton aria-label="ズーム"><PageZoomIcon /><Caret size={6} color="#6f7f8f" /></NavButton>
            <NavButton aria-label="オービット"><OrbitIcon /><Caret size={6} color="#6f7f8f" /></NavButton>
            <NavButton aria-label="面を表示"><CameraIcon /></NavButton>
            <NavEdge $last aria-label="オプション"><EdgeDot d="M4 5.500H10M4 8.500H10" /></NavEdge>
          </NavBar>
        </Viewport>

        <DocTabs>
          <DocTab $active>
            <button>ムニ完成形.iam</button>
            <button aria-label="タブを閉じる">
              <svg width="16" height="16" viewBox="0 0 16 16"><path d="M2 2L14 14M14 2L2 14" stroke="#8a8a8a" strokeWidth="2.500" /></svg>
            </button>
          </DocTab>
          <DocTab>
            <button><Label>レスコン骨組み.iam</Label></button>
          </DocTab>
          <MenuButton aria-label="メニュー">
            <svg width="24" height="20" viewBox="0 0 24 20"><path d="M0 2H24M0 10H24M0 18H24" stroke="#606060" strokeWidth="3" /></svg>
          </MenuButton>
        </DocTabs>

        <StatusBar>
          <StatusCell>6</StatusCell>
          <StatusCell>8</StatusCell>
        </StatusBar>
      </Window>
    </Page>
  );
}
